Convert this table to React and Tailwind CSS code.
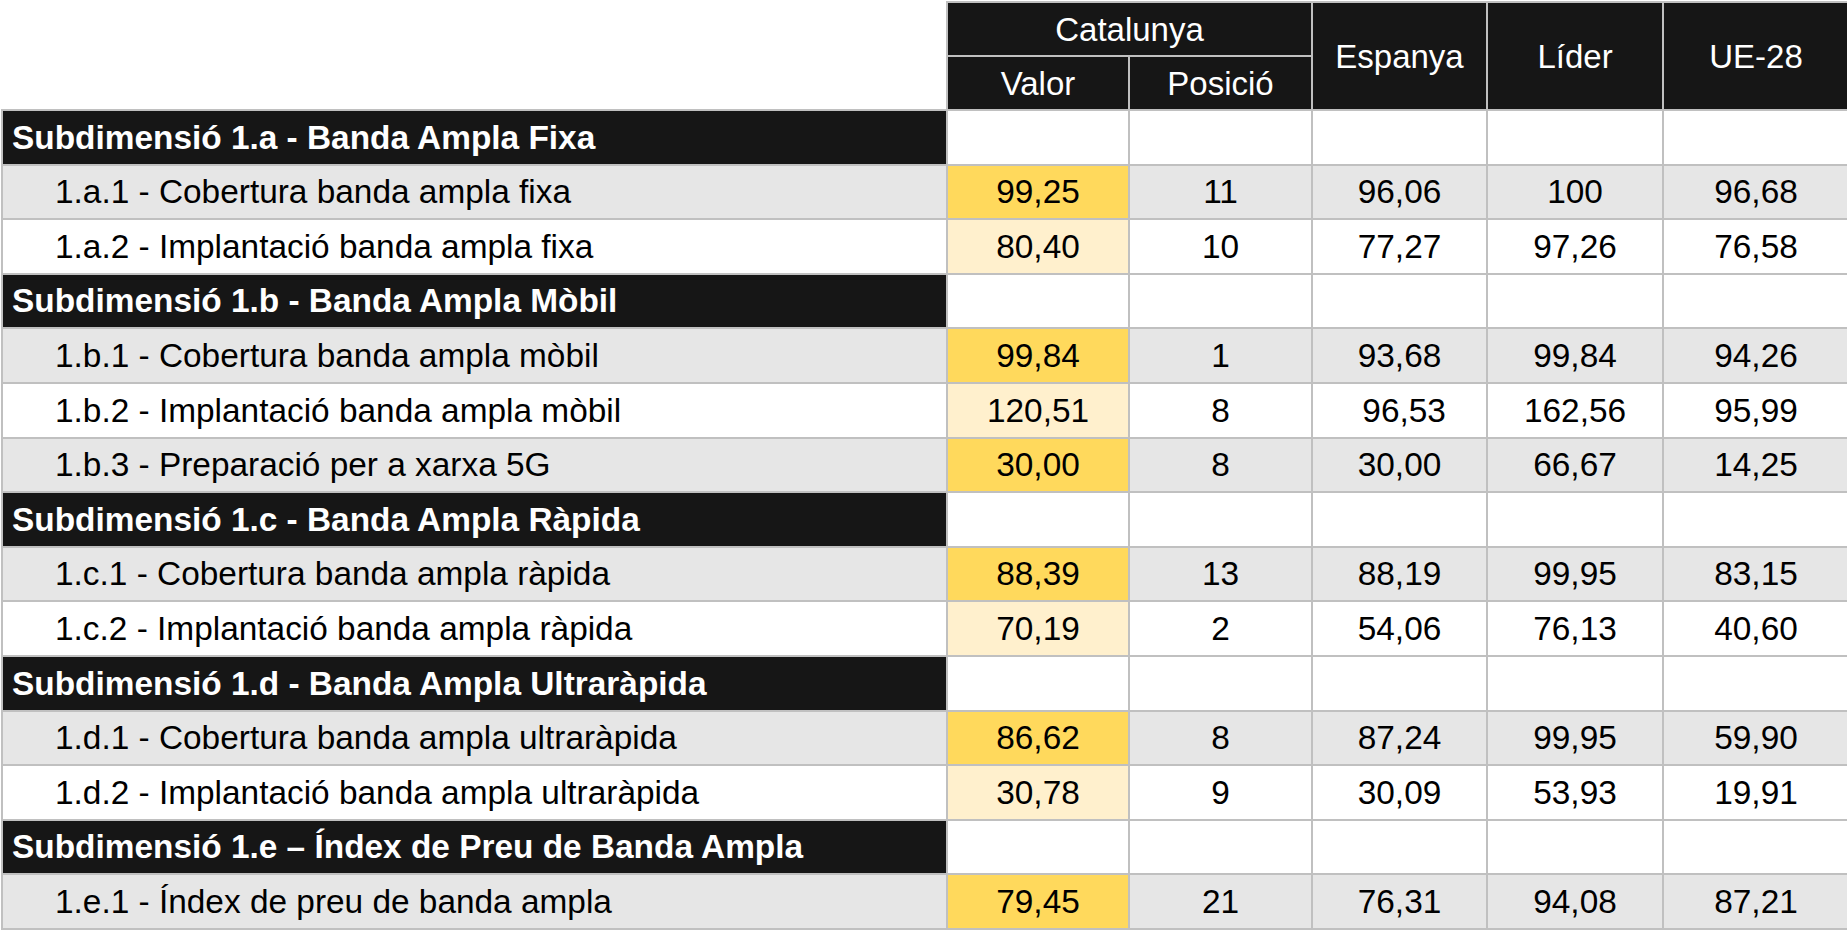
const rows = [
  { type: 'sub', label: 'Subdimensió 1.a - Banda Ampla Fixa' },
  { label: '1.a.1 - Cobertura banda ampla fixa', valor: '99,25', pos: '11', esp: '96,06', lider: '100', ue: '96,68', gray: true },
  { label: '1.a.2 - Implantació banda ampla fixa', valor: '80,40', pos: '10', esp: '77,27', lider: '97,26', ue: '76,58' },
  { type: 'sub', label: 'Subdimensió 1.b - Banda Ampla Mòbil' },
  { label: '1.b.1 - Cobertura banda ampla mòbil', valor: '99,84', pos: '1', esp: '93,68', lider: '99,84', ue: '94,26', gray: true },
  { label: '1.b.2 - Implantació banda ampla mòbil', valor: '120,51', pos: '8', esp: '\u00a096,53', lider: '162,56', ue: '95,99' },
  { label: '1.b.3 - Preparació per a xarxa 5G', valor: '30,00', pos: '8', esp: '30,00', lider: '66,67', ue: '14,25', gray: true },
  { type: 'sub', label: 'Subdimensió 1.c - Banda Ampla Ràpida' },
  { label: '1.c.1 - Cobertura banda ampla ràpida', valor: '88,39', pos: '13', esp: '88,19', lider: '99,95', ue: '83,15', gray: true },
  { label: '1.c.2 - Implantació banda ampla ràpida', valor: '70,19', pos: '2', esp: '54,06', lider: '76,13', ue: '40,60' },
  { type: 'sub', label: 'Subdimensió 1.d - Banda Ampla Ultraràpida' },
  { label: '1.d.1 - Cobertura banda ampla ultraràpida', valor: '86,62', pos: '8', esp: '87,24', lider: '99,95', ue: '59,90', gray: true },
  { label: '1.d.2 - Implantació banda ampla ultraràpida', valor: '30,78', pos: '9', esp: '30,09', lider: '53,93', ue: '19,91' },
  { type: 'sub', label: 'Subdimensió 1.e – Índex de Preu de Banda Ampla' },
  { label: '1.e.1 - Índex de preu de banda ampla', valor: '79,45', pos: '21', esp: '76,31', lider: '94,08', ue: '87,21', gray: true },
]

const cell = 'border-2 border-[#c0c0c0] p-0'
const head = cell + ' bg-[#161616] text-white font-normal text-center align-middle'

export default function App() {
  return (
    <div className="w-[1847px] h-[930px] overflow-hidden bg-white pl-px pt-px">
      <table
        className="table-fixed border-collapse w-[1847px] h-[929px] text-[33.4px] leading-none text-black"
        style={{ fontFamily: '"Liberation Sans", Arial, sans-serif' }}
      >
        <colgroup>
          <col className="w-[945px]" />
          <col className="w-[182px]" />
          <col className="w-[183px]" />
          <col className="w-[175px]" />
          <col className="w-[176px]" />
          <col className="w-[186px]" />
        </colgroup>
        <thead>
          <tr className="h-[54px]">
            <td rowSpan={2} className="border-0 p-0" />
            <th colSpan={2} className={head + ' text-[33px]'}>Catalunya</th>
            <th rowSpan={2} className={head + ' text-[33px]'}>Espanya</th>
            <th rowSpan={2} className={head + ' text-[33px]'}>Líder</th>
            <th rowSpan={2} className={head + ' text-[33px]'}>UE-28</th>
          </tr>
          <tr className="h-[54px]">
            <th className={head + ' text-[33px]'}>Valor</th>
            <th className={head + ' text-[33px]'}>Posició</th>
          </tr>
        </thead>
        <tbody>
          {rows.map((r, i) =>
            r.type === 'sub' ? (
              <tr key={i} className="h-[54px]">
                <td className={cell + ' bg-[#161616] text-white font-bold pl-[9px] whitespace-nowrap'}>{r.label}</td>
                <td className={cell} />
                <td className={cell} />
                <td className={cell} />
                <td className={cell} />
                <td className={cell} />
              </tr>
            ) : (
              <tr key={i} className={'h-[54px] ' + (r.gray ? 'bg-[#e6e6e6]' : 'bg-white')}>
                <td className={cell + ' pl-[52px] whitespace-nowrap'}>{r.label}</td>
                <td className={cell + ' text-center ' + (r.gray ? 'bg-[#ffd95c]' : 'bg-[#fff0cd]')}>{r.valor}</td>
                <td className={cell + ' text-center'}>{r.pos}</td>
                <td className={cell + ' text-center whitespace-pre'}>{r.esp}</td>
                <td className={cell + ' text-center'}>{r.lider}</td>
                <td className={cell + ' text-center'}>{r.ue}</td>
              </tr>
            )
          )}
        </tbody>
      </table>
    </div>
  )
}
